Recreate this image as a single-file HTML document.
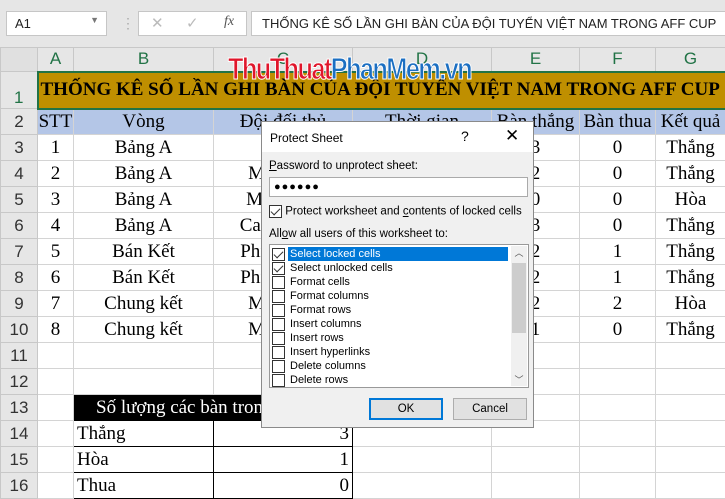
<!DOCTYPE html>
<html><head><meta charset="utf-8"><style>
*{margin:0;padding:0;box-sizing:border-box}
body{width:725px;height:498px;overflow:hidden;background:#fff;position:relative;font-family:"Liberation Serif",serif}
.top{position:absolute;left:0;top:0;width:725px;height:47px;background:#e6e6e6}
.nb{position:absolute;left:6px;top:11px;width:101px;height:25px;background:#fff;border:1px solid #c6c6c6;font:13px "Liberation Sans",sans-serif;padding:4px 0 0 8px;color:#222}
.fx{position:absolute;left:138px;top:11px;width:109px;height:25px;background:#fff;border:1px solid #c6c6c6;font:15px "Liberation Sans";color:#bbb}
.fi{position:absolute;left:251px;top:11px;width:480px;height:25px;background:#fff;border:1px solid #c6c6c6;font:13px "Liberation Sans","Noto Sans CJK SC",sans-serif;padding:4px 0 0 10px;color:#222}
table{position:absolute;left:0;top:47px;width:725px;border-collapse:collapse;table-layout:fixed}
td{border:1px solid #d4d4d4;text-align:center;font-size:19px;white-space:nowrap;overflow:hidden;padding:0;height:26px}
td.h{background:#e6e6e6;font:17px "Liberation Sans",sans-serif;color:#333;border-color:#c8c8c8}
tr.ch td{height:24px;color:#217346}
.dlg{position:absolute;left:261px;top:121px;width:273px;height:307px;background:#f0f0f0;border:1px solid #8a8a8a;font:11px "Liberation Sans",sans-serif;color:#000}
.cb{display:inline-block;width:13px;height:13px;border:1px solid #333;background:#fff;vertical-align:middle;position:relative}
.ck::after{content:"";position:absolute;left:3px;top:0px;width:4px;height:8px;border:solid #333;border-width:0 1.5px 1.5px 0;transform:rotate(45deg)}
.li{height:14px;line-height:14px;padding-left:2px;white-space:nowrap}
.li span.t{margin-left:3px;padding:0 2px}
</style></head><body>
<div class="top">
<div class="nb">A1<span style="position:absolute;right:7px;top:3px;font-size:9px;color:#777">▼</span></div>
<div style="position:absolute;left:121px;top:15px;color:#aaa;font:14px sans-serif">⋮</div>
<div class="fx"><span style="position:absolute;left:12px;top:2px">✕</span><span style="position:absolute;left:47px;top:2px">✓</span><span style="position:absolute;left:85px;top:2px;font:italic 14px 'Liberation Serif';color:#555">fx</span></div>
<div class="fi">THỐNG KÊ SỐ LẦN GHI BÀN CỦA ĐỘI TUYỂN VIỆT NAM TRONG AFF CUP</div>
</div>
<table>
<colgroup><col style="width:37px"><col style="width:36px"><col style="width:140px"><col style="width:139px"><col style="width:139px"><col style="width:88px"><col style="width:76px"><col style="width:70px"></colgroup>
<tr class="ch"><td class="h" style="background:#e0e0e0"></td><td class="h" style="color:#217346">A</td><td class="h" style="color:#217346">B</td><td class="h" style="color:#217346">C</td><td class="h" style="color:#217346">D</td><td class="h" style="color:#217346">E</td><td class="h" style="color:#217346">F</td><td class="h" style="color:#217346">G</td></tr>
<tr><td class="h" style="height:37px;color:#217346;vertical-align:bottom">1</td><td colspan="7" style="background:#bf8f00;border:2px solid #217346;font-weight:bold;font-size:19px;text-align:left;padding-left:2px">THỐNG KÊ SỐ LẦN GHI BÀN CỦA ĐỘI TUYỂN VIỆT NAM TRONG AFF CUP</td></tr>
<tr style="background:#b4c6e7"><td class="h">2</td><td>STT</td><td>Vòng</td><td>Đội đối thủ</td><td>Thời gian</td><td>Bàn thắng</td><td>Bàn thua</td><td>Kết quả</td></tr>
<tr><td class="h">3</td><td>1</td><td>Bảng A</td><td>Lào</td><td></td><td>3</td><td>0</td><td>Thắng</td></tr>
<tr><td class="h">4</td><td>2</td><td>Bảng A</td><td>Malaysia</td><td></td><td>2</td><td>0</td><td>Thắng</td></tr>
<tr><td class="h">5</td><td>3</td><td>Bảng A</td><td>Myanmar</td><td></td><td>0</td><td>0</td><td>Hòa</td></tr>
<tr><td class="h">6</td><td>4</td><td>Bảng A</td><td>Campuchia</td><td></td><td>3</td><td>0</td><td>Thắng</td></tr>
<tr><td class="h">7</td><td>5</td><td>Bán Kết</td><td>Philippines</td><td></td><td>2</td><td>1</td><td>Thắng</td></tr>
<tr><td class="h">8</td><td>6</td><td>Bán Kết</td><td>Philippines</td><td></td><td>2</td><td>1</td><td>Thắng</td></tr>
<tr><td class="h">9</td><td>7</td><td>Chung kết</td><td>Malaysia</td><td></td><td>2</td><td>2</td><td>Hòa</td></tr>
<tr><td class="h">10</td><td>8</td><td>Chung kết</td><td>Malaysia</td><td></td><td>1</td><td>0</td><td>Thắng</td></tr>
<tr><td class="h">11</td><td></td><td></td><td></td><td></td><td></td><td></td><td></td></tr>
<tr><td class="h">12</td><td></td><td></td><td></td><td></td><td></td><td></td><td></td></tr>
<tr><td class="h">13</td><td></td><td colspan="2" style="background:#000;color:#fff;text-align:left;padding-left:22px;border:1px solid #000">Số lượng các bàn trong AFF</td><td></td><td></td><td></td><td></td></tr>
<tr><td class="h">14</td><td></td><td style="border:1px solid #000;text-align:left;padding-left:3px">Thắng</td><td style="border:1px solid #000;text-align:right;padding-right:3px">3</td><td></td><td></td><td></td><td></td></tr>
<tr><td class="h">15</td><td></td><td style="border:1px solid #000;text-align:left;padding-left:3px">Hòa</td><td style="border:1px solid #000;text-align:right;padding-right:3px">1</td><td></td><td></td><td></td><td></td></tr>
<tr><td class="h">16</td><td></td><td style="border:1px solid #000;text-align:left;padding-left:3px">Thua</td><td style="border:1px solid #000;text-align:right;padding-right:3px">0</td><td></td><td></td><td></td><td></td></tr>
</table>
<div style="position:absolute;left:228px;top:51px;font:bold 31px 'Liberation Sans',sans-serif;letter-spacing:-2px;transform:scaleX(0.82);transform-origin:left;white-space:nowrap;-webkit-text-stroke:1px #fff"><span style="color:#e0162b">ThuThuat</span><span style="color:#1c6fc2">PhanMem.vn</span></div>
<div class="dlg">
<div style="height:30px;background:#fff;position:relative"><span style="position:absolute;left:8px;top:9px;font-size:12px">Protect Sheet</span><span style="position:absolute;left:199px;top:6px;font-size:14px">?</span><span style="position:absolute;left:243px;top:4px;font-size:17px">✕</span></div>
<div style="position:absolute;left:7px;top:38px;font-size:11.5px"><u>P</u>assword to unprotect sheet:</div>
<div style="position:absolute;left:7px;top:55px;width:259px;height:20px;background:#fff;border:1px solid #aaa;font-size:11px;padding:3px 0 0 4px;letter-spacing:1px">●●●●●●</div>
<div style="position:absolute;left:7px;top:83px;white-space:nowrap;font-size:11.5px"><span class="cb ck"></span> Protect worksheet and <u>c</u>ontents of locked cells</div>
<div style="position:absolute;left:7px;top:106px;font-size:11.5px">All<u>o</u>w all users of this worksheet to:</div>
<div style="position:absolute;left:7px;top:122px;width:260px;height:144px;background:#fff;border:1px solid #999;padding-top:2px;font-size:11px">
<div class="li"><span class="cb ck"></span><span class="t" style="background:#0078d7;color:#fff;display:inline-block;width:220px">Select locked cells</span></div>
<div class="li"><span class="cb ck"></span><span class="t">Select unlocked cells</span></div>
<div class="li"><span class="cb"></span><span class="t">Format cells</span></div>
<div class="li"><span class="cb"></span><span class="t">Format columns</span></div>
<div class="li"><span class="cb"></span><span class="t">Format rows</span></div>
<div class="li"><span class="cb"></span><span class="t">Insert columns</span></div>
<div class="li"><span class="cb"></span><span class="t">Insert rows</span></div>
<div class="li"><span class="cb"></span><span class="t">Insert hyperlinks</span></div>
<div class="li"><span class="cb"></span><span class="t">Delete columns</span></div>
<div class="li"><span class="cb"></span><span class="t">Delete rows</span></div>
<div style="position:absolute;right:1px;top:1px;width:16px;height:140px;background:#f0f0f0"><div style="font-size:9px;text-align:center;color:#555">︿</div><div style="position:absolute;left:1px;top:17px;width:14px;height:70px;background:#cdcdcd"></div><div style="position:absolute;bottom:0;width:16px;font-size:9px;text-align:center;color:#555">﹀</div></div>
</div>
<div style="position:absolute;left:107px;top:276px;width:74px;height:22px;border:2px solid #0078d7;background:#e1e1e1;text-align:center;line-height:18px;font-size:11.5px">OK</div>
<div style="position:absolute;left:191px;top:276px;width:74px;height:22px;border:1px solid #adadad;background:#e1e1e1;text-align:center;line-height:20px;font-size:11.5px">Cancel</div>
</div>
</body></html>
